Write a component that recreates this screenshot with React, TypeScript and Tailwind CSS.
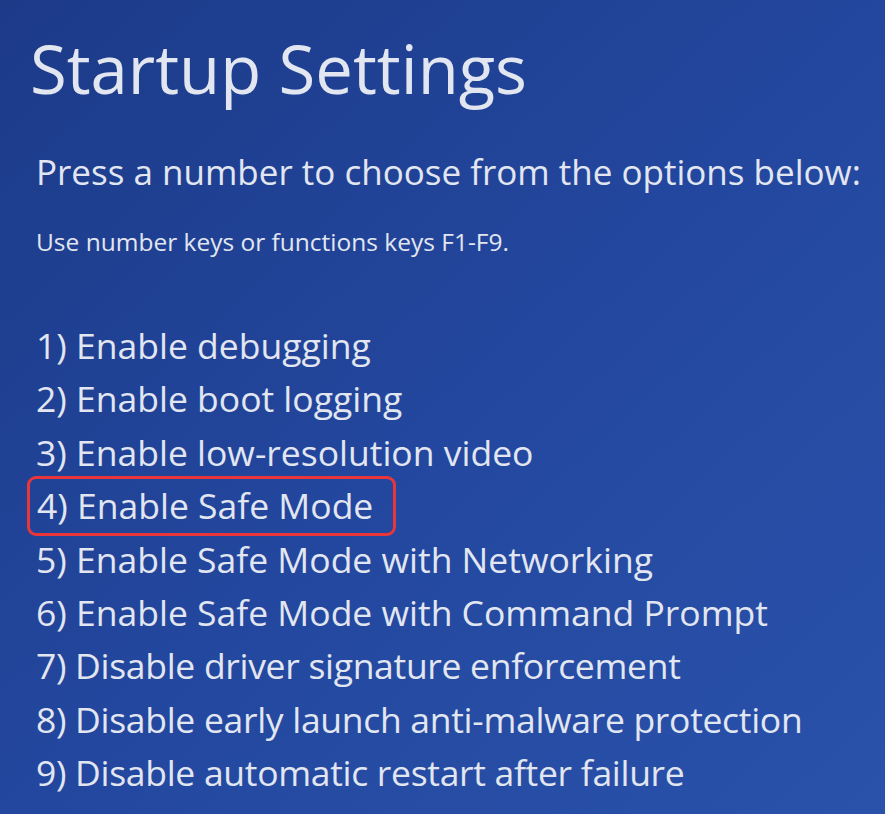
import React from "react";

const items = [
  "1) Enable debugging",
  "2) Enable boot logging",
  "3) Enable low-resolution video",
  "4) Enable Safe Mode",
  "5) Enable Safe Mode with Networking",
  "6) Enable Safe Mode with Command Prompt",
  "7) Disable driver signature enforcement",
  "8) Disable early launch anti-malware protection",
  "9) Disable automatic restart after failure",
];

export default function App() {
  return (
    <div
      className="w-[885px] h-[814px] overflow-hidden bg-gradient-to-br from-[#1c3a88] via-[#23479e] to-[#2a52ab] text-[#e2e6f0] flex flex-col"
      style={{ fontFamily: '"Open Sans", "Noto Sans", sans-serif' }}
    >
      <h1 className="pl-[30px] pt-[28px] text-[67px] leading-[80px] font-normal">
        Startup Settings
      </h1>
      <p className="pl-[36px] mt-[42px] text-[35px] leading-[44px]">
        Press a number to choose from the options below:
      </p>
      <p className="pl-[36px] mt-[34px] text-[24.5px] leading-[28px]">
        Use number keys or functions keys F1-F9.
      </p>
      <ul className="mt-[63px] flex flex-col">
        {items.map((t, i) => (
          <li key={i} className="h-[53.4px] flex items-center pl-[36px]">
            {i === 3 ? (
              <span className="-ml-[9px] pl-[7px] pr-[20px] h-[60px] flex items-center border-[3px] border-[#e8363a] rounded-[9px] text-[35.5px]">
                {t}
              </span>
            ) : i >= 6 ? (
              <span className="text-[35.5px] tracking-[-0.3px]">{t}</span>
            ) : (
              <span className="text-[35.5px]">{t}</span>
            )}
          </li>
        ))}
      </ul>
    </div>
  );
}
